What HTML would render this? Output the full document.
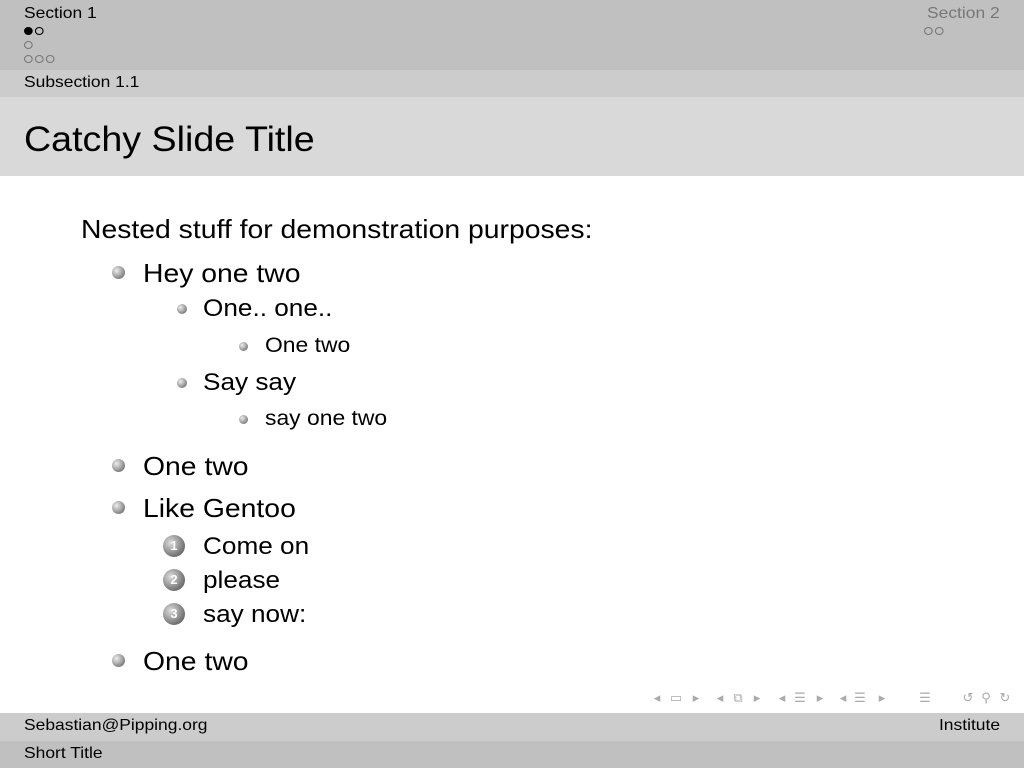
<!DOCTYPE html>
<html><head><style>
body{margin:0;width:1024px;height:768px;position:relative;background:#fff;font-family:"Liberation Sans","DejaVu Sans",sans-serif;color:#000;overflow:hidden}
.a{position:absolute;white-space:nowrap;transform-origin:left center;transform:scaleX(1.09)}
.r{position:absolute;white-space:nowrap;transform-origin:right center;transform:scaleX(1.09)}
.ball{position:absolute;border-radius:50%;background:radial-gradient(circle at 35% 35%,#eee,#999 55%,#555)}
.num{position:absolute;width:22px;height:22px;border-radius:50%;background:radial-gradient(circle at 35% 35%,#ddd,#888 55%,#444);color:#fff;font-size:13px;text-align:center;line-height:22px;font-weight:bold}
.d{display:inline-block;width:8px;height:8px;border-radius:50%;border:1.3px solid #777;box-sizing:border-box;margin-right:2px}
.n{position:absolute;top:690px;font-size:13px;color:#aaa;transform:translateX(-50%)}
.bar{position:absolute;left:0;width:1024px}
</style></head><body>
<div class="bar" style="top:0;height:70px;background:#c0c0c0"></div>
<div class="bar" style="top:70px;height:27px;background:#cccccc"></div>
<div class="bar" style="top:97px;height:79px;background:#d9d9d9"></div>
<div class="a" style="left:24px;top:5px;font-size:16px">Section 1</div>
<div class="a" style="left:24px;top:27px;line-height:0"><span class="d" style="background:#000;border-color:#000"></span><span class="d" style="border-color:#000"></span></div>
<div class="a" style="left:24px;top:41px;line-height:0"><span class="d"></span></div>
<div class="a" style="left:24px;top:55px;line-height:0"><span class="d"></span><span class="d"></span><span class="d"></span></div>
<div class="r" style="right:24px;top:5px;font-size:16px;color:#777">Section 2</div>
<div class="a" style="left:924px;top:27px;line-height:0"><span class="d"></span><span class="d"></span></div>
<div class="a" style="left:24px;top:74px;font-size:16px">Subsection 1.1</div>
<div class="a" style="left:24px;top:120px;font-size:35px;transform:scaleX(1.075)">Catchy Slide Title</div>

<div class="a" style="left:81px;top:214px;font-size:26px">Nested stuff for demonstration purposes:</div>
<div class="ball" style="left:112px;top:266px;width:13px;height:13px"></div>
<div class="a" style="left:143px;top:258px;font-size:26px">Hey one two</div>
<div class="ball" style="left:177px;top:304px;width:10px;height:10px"></div>
<div class="a" style="left:203px;top:295px;font-size:24px">One.. one..</div>
<div class="ball" style="left:239px;top:342px;width:9px;height:9px"></div>
<div class="a" style="left:265px;top:334px;font-size:21px">One two</div>
<div class="ball" style="left:177px;top:378px;width:10px;height:10px"></div>
<div class="a" style="left:203px;top:369px;font-size:24px">Say say</div>
<div class="ball" style="left:239px;top:415px;width:9px;height:9px"></div>
<div class="a" style="left:265px;top:407px;font-size:21px">say one two</div>
<div class="ball" style="left:112px;top:459px;width:13px;height:13px"></div>
<div class="a" style="left:143px;top:451px;font-size:26px">One two</div>
<div class="ball" style="left:112px;top:501px;width:13px;height:13px"></div>
<div class="a" style="left:143px;top:493px;font-size:26px">Like Gentoo</div>
<div class="num" style="left:163px;top:535px">1</div>
<div class="a" style="left:203px;top:533px;font-size:24px">Come on</div>
<div class="num" style="left:163px;top:569px">2</div>
<div class="a" style="left:203px;top:567px;font-size:24px">please</div>
<div class="num" style="left:163px;top:603px">3</div>
<div class="a" style="left:203px;top:601px;font-size:24px">say now:</div>
<div class="ball" style="left:112px;top:654px;width:13px;height:13px"></div>
<div class="a" style="left:143px;top:646px;font-size:26px">One two</div>

<div class="n" style="left:657px">◂</div><div class="n" style="left:676px">▭</div><div class="n" style="left:696px">▸</div>
<div class="n" style="left:720px">◂</div><div class="n" style="left:738px">⧉</div><div class="n" style="left:757px">▸</div>
<div class="n" style="left:782px">◂</div><div class="n" style="left:800px">☰</div><div class="n" style="left:820px">▸</div>
<div class="n" style="left:843px">◂</div><div class="n" style="left:860px">☰</div><div class="n" style="left:882px">▸</div>
<div class="n" style="left:925px">☰</div>
<div class="n" style="left:968px">↺</div><div class="n" style="left:986px">⚲</div><div class="n" style="left:1005px">↻</div>

<div class="bar" style="top:713px;height:28px;background:#cccccc"></div>
<div class="bar" style="top:741px;height:27px;background:#c0c0c0"></div>
<div class="a" style="left:24px;top:717px;font-size:16px">Sebastian@Pipping.org</div>
<div class="r" style="right:24px;top:717px;font-size:16px">Institute</div>
<div class="a" style="left:24px;top:745px;font-size:16px">Short Title</div>
</body></html>
